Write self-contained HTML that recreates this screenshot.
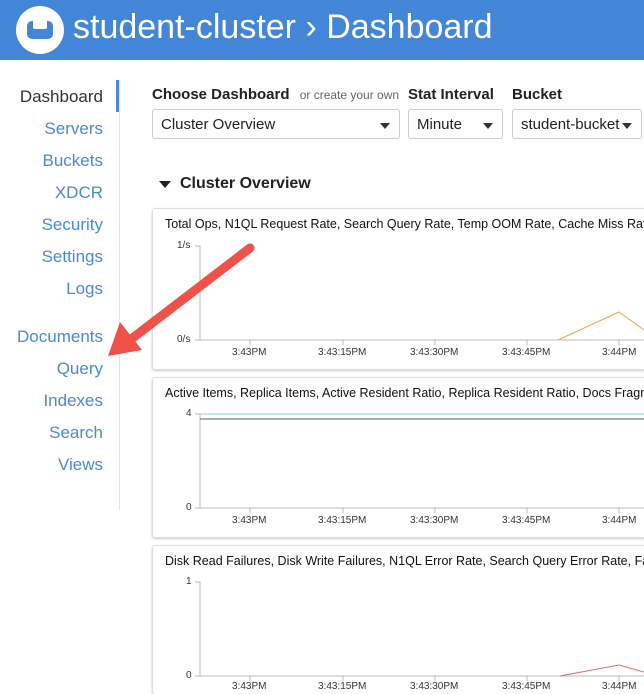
<!DOCTYPE html><html><head><style>
body{margin:0;width:644px;height:694px;overflow:hidden;font-family:"Liberation Sans",sans-serif;background:#fff;position:relative}
.hd{position:absolute;left:0;top:0;width:644px;height:60px;background:#4386d8}
.logo{position:absolute;left:16px;top:6px;width:48px;height:48px;border-radius:50%;background:#fff}
.logo i{position:absolute;left:11px;top:15px;width:26px;height:18px;background:#4386d8;border-radius:5px}
.logo b{position:absolute;left:17px;top:15px;width:14px;height:8px;background:#fff;border-radius:0 0 2px 2px}
.ht{position:absolute;left:73px;top:8px;color:#fff;font-size:34px}
.nav{position:absolute;right:541px;text-align:right;color:#4a8ad8;font-size:17px}
.bar{position:absolute;left:116px;top:80px;width:4px;height:32px;background:#4a8ad8}
.vl{position:absolute;left:119px;top:80px;width:1px;height:430px;background:#e4e4e4}
.lbl{position:absolute;font-size:15px;font-weight:bold;color:#222}
.sel{position:absolute;top:109px;height:30px;border:1px solid #ccc;border-radius:3px;font-size:15px;color:#222;line-height:30px;padding-left:8px;box-sizing:border-box}
.sel:after{content:"";position:absolute;right:9px;top:13px;border:5px solid transparent;border-top:6px solid #333}
.card{position:absolute;left:152px;width:491px;border:1px solid #ddd;border-right:none;border-radius:3px 0 0 3px;box-shadow:0 1px 2px #ccc;overflow:hidden}
.ct{position:absolute;left:12px;top:8px;font-size:12.5px;color:#111;white-space:nowrap}
.ax{position:absolute;font-size:10px;color:#333}
</style></head><body>
<div class="hd"><div class="logo"><i></i><b></b></div><div class="ht">student-cluster › Dashboard</div></div>
<div class="nav" style="top:87px;color:#333">Dashboard</div>
<div class="nav" style="top:119px">Servers</div>
<div class="nav" style="top:151px">Buckets</div>
<div class="nav" style="top:183px">XDCR</div>
<div class="nav" style="top:215px">Security</div>
<div class="nav" style="top:247px">Settings</div>
<div class="nav" style="top:279px">Logs</div>
<div class="nav" style="top:327px">Documents</div>
<div class="nav" style="top:359px">Query</div>
<div class="nav" style="top:391px">Indexes</div>
<div class="nav" style="top:423px">Search</div>
<div class="nav" style="top:455px">Views</div>
<div class="bar"></div><div class="vl"></div>
<div class="lbl" style="left:152px;top:86px">Choose Dashboard <span style="font-weight:normal;font-size:12px;color:#666;margin-left:6px">or create your own</span></div>
<div class="lbl" style="left:408px;top:86px">Stat Interval</div>
<div class="lbl" style="left:512px;top:86px">Bucket</div>
<div class="sel" style="left:152px;width:248px">Cluster Overview</div>
<div class="sel" style="left:408px;width:95px">Minute</div>
<div class="sel" style="left:512px;width:130px">student-bucket</div>
<div style="position:absolute;left:159px;top:181px;border:6px solid transparent;border-top:7px solid #222"></div>
<div class="lbl" style="left:180px;top:175px;font-size:16px">Cluster Overview</div>

<div class="card" style="top:208px;height:160px"><div class="ct">Total Ops, N1QL Request Rate, Search Query Rate, Temp OOM Rate, Cache Miss Rate</div></div>
<div class="card" style="top:377px;height:159px"><div class="ct">Active Items, Replica Items, Active Resident Ratio, Replica Resident Ratio, Docs Fragmentation</div></div>
<div class="card" style="top:545px;height:148px;border-bottom:none"><div class="ct">Disk Read Failures, Disk Write Failures, N1QL Error Rate, Search Query Error Rate, Failures</div></div>

<svg style="position:absolute;left:0;top:0" width="644" height="694">
<g stroke="#bbb" fill="none"><path d="M195 246H200V340M195 340H644M250 340v5M343 340v5M435 340v5M527 340v5M619 340v5"/>
<path d="M195 414H200V508M195 508H644M250 508v5M343 508v5M435 508v5M527 508v5M619 508v5"/>
<path d="M195 582H200V676M195 676H644M250 676v5M343 676v5M435 676v5M527 676v5M619 676v5"/></g>
<path d="M558 340L619 312L644 330" stroke="#f7a24a" fill="none"/>
<path d="M200 414H644" stroke="#8fd4c4"/><path d="M200 419H644" stroke="#3c6e5a"/>
<path d="M560 676L619 665L644 672" stroke="#e46a6a" fill="none"/>
<path d="M250 248L130 340" stroke="#f0524a" stroke-width="9" stroke-linecap="round"/>
<path d="M108 356L120 322L142 350Z" fill="#f0524a"/>
</svg>
<div class="ax" style="left:177px;top:240px">1/s</div><div class="ax" style="left:177px;top:334px">0/s</div>
<div class="ax" style="left:186px;top:408px">4</div><div class="ax" style="left:186px;top:502px">0</div>
<div class="ax" style="left:186px;top:576px">1</div><div class="ax" style="left:186px;top:670px">0</div>
<div class="ax" style="left:232px;top:347px">3:43PM</div><div class="ax" style="left:318px;top:347px">3:43:15PM</div><div class="ax" style="left:410px;top:347px">3:43:30PM</div><div class="ax" style="left:502px;top:347px">3:43:45PM</div><div class="ax" style="left:602px;top:347px">3:44PM</div>
<div class="ax" style="left:232px;top:515px">3:43PM</div><div class="ax" style="left:318px;top:515px">3:43:15PM</div><div class="ax" style="left:410px;top:515px">3:43:30PM</div><div class="ax" style="left:502px;top:515px">3:43:45PM</div><div class="ax" style="left:602px;top:515px">3:44PM</div>
<div class="ax" style="left:232px;top:681px">3:43PM</div><div class="ax" style="left:318px;top:681px">3:43:15PM</div><div class="ax" style="left:410px;top:681px">3:43:30PM</div><div class="ax" style="left:502px;top:681px">3:43:45PM</div><div class="ax" style="left:602px;top:681px">3:44PM</div>
</body></html>
